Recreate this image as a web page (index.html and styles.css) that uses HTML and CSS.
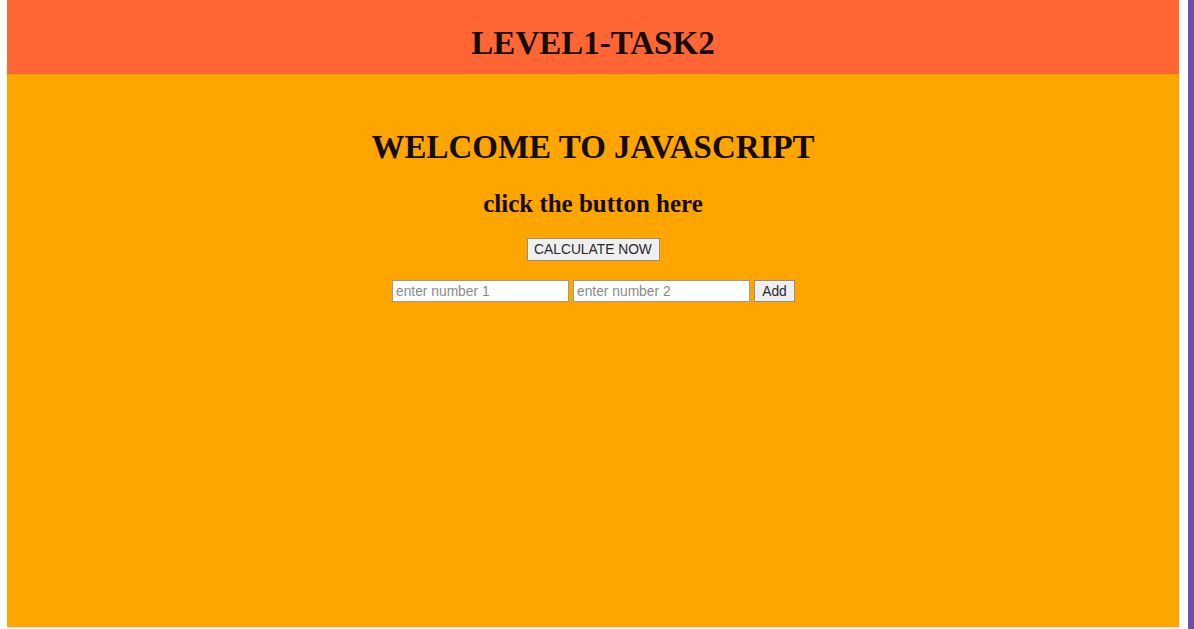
FILE: index.html
```html
<!DOCTYPE html>
<html lang="en">
<head>
<meta charset="utf-8">
<title>LEVEL1-TASK2</title>
<link rel="stylesheet" href="styles.css">
</head>
<body>
<div class="page">
  <div class="panel">
    <header class="topbar">
      <h1 class="topbar-title">LEVEL1-TASK2</h1>
    </header>
    <main class="content">
      <h1 class="welcome">WELCOME TO JAVASCRIPT</h1>
      <h2 class="prompt">click the button here</h2>
      <button class="btn calc-btn" type="button">CALCULATE NOW</button>
      <div class="add-row">
        <input class="num-input" type="text" placeholder="enter number 1">
        <input class="num-input" type="text" placeholder="enter number 2">
        <button class="btn add-btn" type="button">Add</button>
      </div>
    </main>
  </div>
  <div class="edge"></div>
</div>
</body>
</html>
```
FILE: styles.css
```css
html, body {
  margin: 0;
  padding: 0;
  background: #ffffff;
}

body {
  width: 1194px;
  height: 629px;
  overflow: hidden;
}

.page {
  display: flex;
  height: 629px;
}

.panel {
  margin-left: 7px;
  width: 1172px;
  height: 627px;
  background: #ffa500;
  border-bottom: 1px solid #e6ddd0;
  box-shadow: 1px 0 0 #f3e6c8;
  display: flex;
  flex-direction: column;
}

.topbar {
  background: #ff6633;
  height: 74px;
  box-sizing: border-box;
  padding-top: 27px;
  text-align: center;
}

.topbar-title {
  margin: 0;
  font-family: "Liberation Serif", "Times New Roman", serif;
  font-weight: bold;
  font-size: 33px;
  line-height: 33px;
  color: #140c05;
}

.content {
  display: flex;
  flex-direction: column;
  align-items: center;
  flex: 1;
}

.welcome {
  margin: 57px 0 0;
  font-family: "Liberation Serif", "Times New Roman", serif;
  font-weight: bold;
  font-size: 33px;
  line-height: 33px;
  color: #140c05;
}

.prompt {
  margin: 27px 0 0;
  font-family: "Liberation Serif", "Times New Roman", serif;
  font-weight: bold;
  font-size: 25px;
  line-height: 25px;
  color: #140c05;
}

.btn {
  font-family: "Liberation Sans", Arial, sans-serif;
  font-size: 13.8px;
  line-height: 17px;
  color: #2a2a2a;
  background: #efefef;
  border: 1px solid #8f8f8f;
  border-radius: 0;
  padding: 2px 4px;
  box-sizing: border-box;
}

.calc-btn {
  margin-top: 22px;
  width: 133px;
  height: 23px;
}

.add-row {
  margin-top: 19px;
  display: flex;
  gap: 4px;
  padding-left: 1px;
}

.num-input {
  width: 177px;
  height: 22px;
  box-sizing: border-box;
  border: 1px solid #9a9a9a;
  background: #ffffff;
  padding: 1px 3px;
  font-family: "Liberation Sans", Arial, sans-serif;
  font-size: 13.8px;
  margin: 0;
}

.num-input::placeholder {
  color: #8a8a8a;
}

.add-btn {
  width: 41px;
  height: 22px;
  padding: 1px 2px;
}

.edge {
  margin-left: auto;
  width: 6px;
  height: 629px;
  background: #6c4fa9;
}
```
